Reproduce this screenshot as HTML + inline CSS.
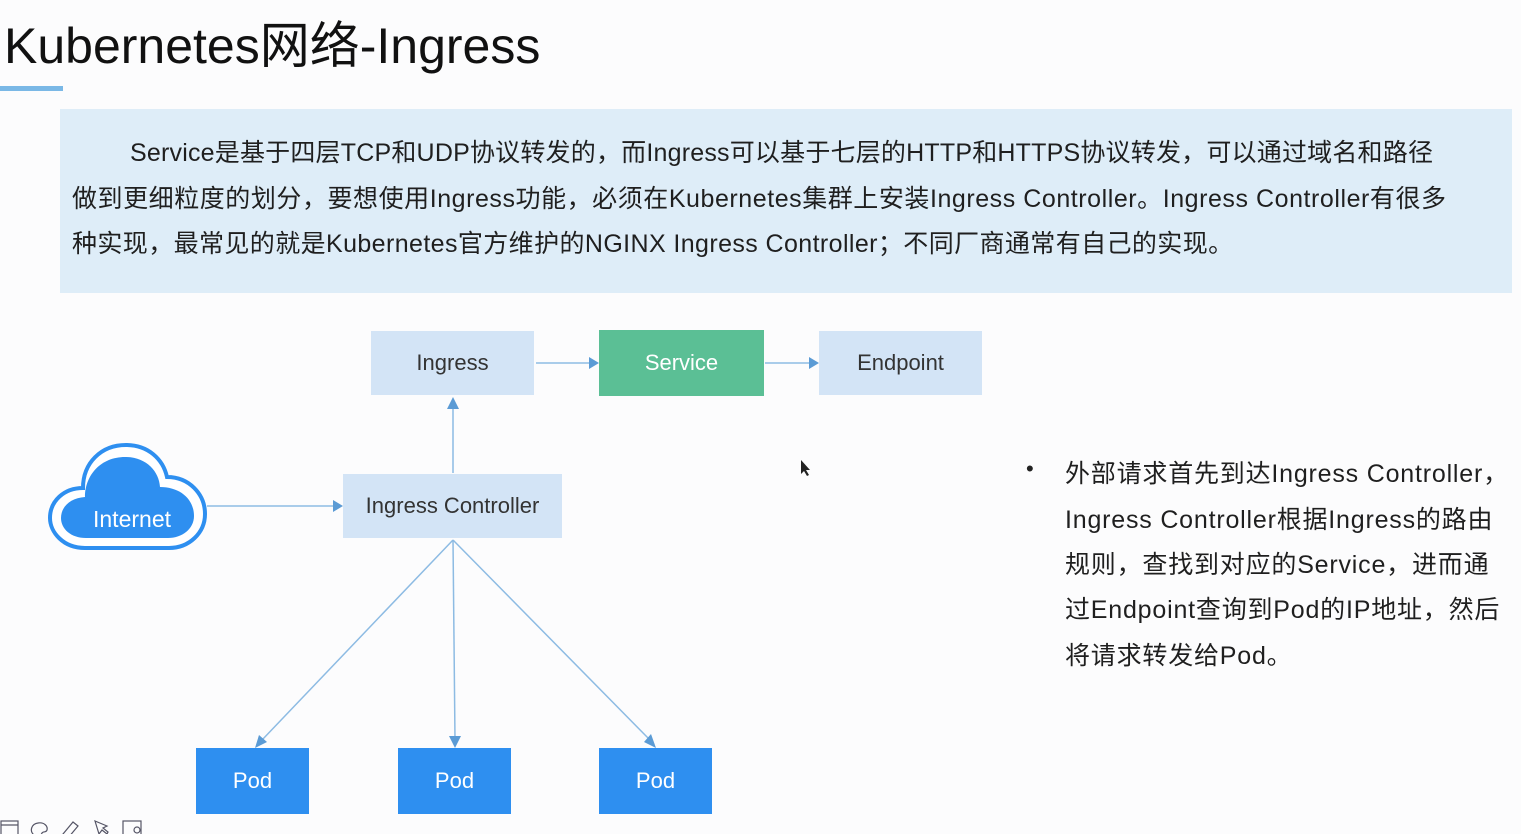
<!DOCTYPE html>
<html><head><meta charset="utf-8"><style>
body{margin:0;width:1521px;height:834px;background:#fcfcfd;position:relative;overflow:hidden;font-family:"Liberation Sans","Noto Sans CJK SC",sans-serif;color:#222}
.t{position:absolute;left:4px;top:6px;font-size:50px;color:#111;white-space:nowrap}
.bar{position:absolute;left:0;top:86px;width:63px;height:5px;background:#7ab8e6}
.box{position:absolute;left:60px;top:109px;width:1452px;height:184px;background:#deedf8}
.ln{position:absolute;left:72px;font-size:25px;letter-spacing:0.4px;white-space:nowrap;color:#1f1f1f}
.b{position:absolute;display:flex;align-items:center;justify-content:center;font-size:22px;color:#333}
.lb{background:#d3e4f6}
.pod{background:#2e8ff0;color:#fff}
.r{position:absolute;left:1065px;font-size:25px;letter-spacing:0.8px;white-space:nowrap;color:#1f1f1f}
</style></head><body>
<div class="t">Kubernetes网络-Ingress</div>
<div class="bar"></div>
<div class="box"></div>
<div class="ln" style="left:130px;top:133px;letter-spacing:0.2px">Service是基于四层TCP和UDP协议转发的，而Ingress可以基于七层的HTTP和HTTPS协议转发，可以通过域名和路径</div>
<div class="ln" style="top:179px;letter-spacing:0.55px">做到更细粒度的划分，要想使用Ingress功能，必须在Kubernetes集群上安装Ingress Controller。Ingress Controller有很多</div>
<div class="ln" style="top:224px">种实现，最常见的就是Kubernetes官方维护的NGINX Ingress Controller；不同厂商通常有自己的实现。</div>

<svg style="position:absolute;left:0;top:0" width="1521" height="834">
<g stroke="#8dbbe3" stroke-width="1.5" fill="none">
<line x1="536" y1="363" x2="590" y2="363"/>
<line x1="765" y1="363" x2="810" y2="363"/>
<line x1="453" y1="473" x2="453" y2="405"/>
<line x1="207" y1="506" x2="333" y2="506"/>
<line x1="453" y1="540" x2="262" y2="740"/>
<line x1="453" y1="540" x2="455" y2="740"/>
<line x1="453" y1="540" x2="650" y2="740"/>
</g>
<g fill="#5b9bd5">
<path d="M599 363l-10-6v12z"/><path d="M819 363l-10-6v12z"/>
<path d="M453 397l-6 12h12z"/><path d="M343 506l-10-6v12z"/>
<path d="M255 748l4-13 8 7z"/><path d="M455 748l-6-12h12z"/><path d="M656 748l-12-6 7-8z"/>
</g>
<path d="M85 548c-22 0-35-16-35-30 0-17 14-30 33-30 0-25 18-43 43-43 22 0 37 14 41 32 22 0 38 17 38 37 0 19-16 34-36 34z" fill="#fff" stroke="#2e8ff0" stroke-width="4"/>
<path d="M86 538c-15 0-25-9-25-20 0-11 9-20 24-21 0-22 16-40 40-40 21 0 34 14 35 30 20 0 34 12 34 29 0 13-12 22-26 22z" fill="#2e8ff0"/>
<text x="132" y="527" fill="#fff" font-size="23" text-anchor="middle" font-family="Liberation Sans, sans-serif">Internet</text>
<path d="M801 460l0 14 3-3 3 5 2-1-3-5h4z" fill="#222"/>
</svg>

<div class="b lb" style="left:371px;top:331px;width:163px;height:64px">Ingress</div>
<div class="b" style="left:599px;top:330px;width:165px;height:66px;background:#5bbf95;color:#fff">Service</div>
<div class="b lb" style="left:819px;top:331px;width:163px;height:64px">Endpoint</div>
<div class="b lb" style="left:343px;top:474px;width:219px;height:64px">Ingress Controller</div>
<div class="b pod" style="left:196px;top:748px;width:113px;height:66px">Pod</div>
<div class="b pod" style="left:398px;top:748px;width:113px;height:66px">Pod</div>
<div class="b pod" style="left:599px;top:748px;width:113px;height:66px">Pod</div>

<div style="position:absolute;left:1026px;top:456px;font-size:22px">•</div>
<div class="r" style="top:454px">外部请求首先到达Ingress Controller，</div>
<div class="r" style="top:500px">Ingress Controller根据Ingress的路由</div>
<div class="r" style="top:545px">规则，查找到对应的Service，进而通</div>
<div class="r" style="top:590px">过Endpoint查询到Pod的IP地址，然后</div>
<div class="r" style="top:636px">将请求转发给Pod。</div>

<svg style="position:absolute;left:0;top:818px" width="150" height="16" fill="none" stroke="#556" stroke-width="1.2">
<rect x="1" y="3" width="17" height="14"/><line x1="1" y1="7" x2="18" y2="7"/>
<path d="M33 16c-3-3-2-10 5-11 6-1 10 3 9 7-1 3-4 1-5 3-1 3-6 4-9 1z"/>
<path d="M63 16l10-12 5 4-10 12z"/>
<path d="M95 3l4 13 3-4 5 4 1-2-5-4 4-2z"/>
<rect x="123" y="3" width="18" height="14"/><circle cx="137" cy="12" r="3"/>
</svg>
</body></html>
